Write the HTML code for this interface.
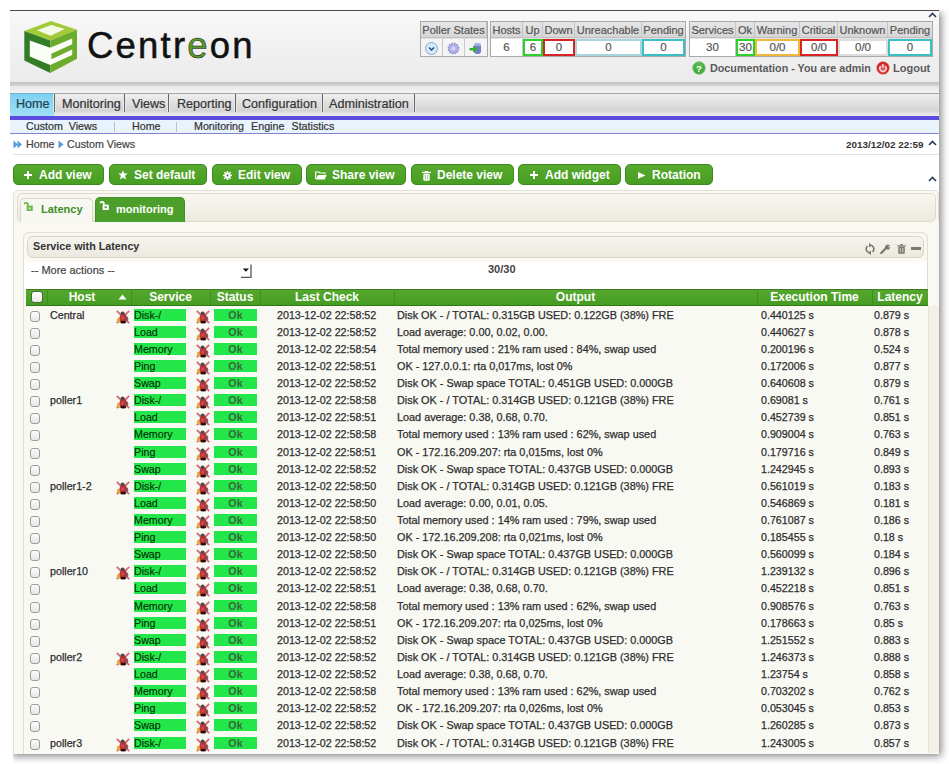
<!DOCTYPE html>
<html><head><meta charset="utf-8">
<style>
*{box-sizing:border-box;margin:0;padding:0}
html,body{width:949px;height:764px;overflow:hidden;background:#fff;font-family:"Liberation Sans",sans-serif;color:#333}
.a{position:absolute}
#page{position:absolute;left:10px;top:10px;width:929px;height:744px;background:#fff;box-shadow:2px 2px 8px rgba(0,0,0,0.5);clip-path:inset(0 -20px -20px 3px)}
#hdr{position:absolute;left:10px;top:10px;width:929px;height:72px;border-top:1px solid #4e4a46;background:linear-gradient(#f8f8f8,#f1f1f1 50%,#ebebeb)}
#hshadow{position:absolute;left:10px;top:82px;width:929px;height:4px;background:linear-gradient(#c0c0c0,#d4d4d4)}
#hgap{position:absolute;left:10px;top:86px;width:929px;height:7px;background:linear-gradient(#e8e8e8,#f4f4f4)}
#menu{position:absolute;left:10px;top:93px;width:929px;height:23px;border-top:1px solid #a4a4a4;background:linear-gradient(#f0f0f0,#e2e2e2 35%,#d4d4d4 75%,#e6e6e6 90%,#ececec)}
#home{position:absolute;left:10px;top:93px;width:44px;height:23px;border-top:1px solid #6aaed8;background:linear-gradient(#80d0f0,#92daf4 60%,#a0e0f4)}
.mi{position:absolute;top:97px;font-size:12.6px;color:#333;line-height:15px;white-space:nowrap}
.msep{position:absolute;top:94px;width:3px;height:18px;border-left:1px solid #e8e8e8;border-right:1px solid #e8e8e8;background:#666}
#purple{position:absolute;left:10px;top:116px;width:929px;height:4px;background:#5b4be0}
#sub{position:absolute;left:10px;top:120px;width:929px;height:14px;background:#e8f3fc;border-bottom:1px solid #8480d4}
.si{position:absolute;top:120px;font-size:10.7px;color:#333;line-height:13px;white-space:nowrap}
.ssep{position:absolute;top:122px;width:1px;height:10px;background:#b8c0cc}
#bc{position:absolute;left:26px;top:138px;font-size:10.7px;line-height:13px;color:#444;white-space:nowrap}
#bcline{position:absolute;left:13px;top:154px;width:926px;height:1px;background:#e2e2e2}
#date{position:absolute;left:846px;top:139px;font-size:9.9px;font-weight:bold;color:#333;line-height:12px}
.caret{position:absolute;width:9px;height:6px}
.btn{position:absolute;top:164px;height:21px;border-radius:5px;background:linear-gradient(#56aa2e,#489e22);border:1px solid #3d8a20;color:#fff;font-weight:bold;font-size:12px;line-height:19px;white-space:nowrap}
.btn .t{position:absolute;top:1px}
.btn svg{position:absolute}
/* poller tables */
.pt{position:absolute;border:1px solid #a9a9a9;background:#e3e3e3}
.ph{position:absolute;top:22px;height:16px;background:linear-gradient(#e6e6e6,#d6d6d6);font-size:11px;color:#555;line-height:17px;text-align:center;white-space:nowrap;border-right:1px solid #c4c4c4;border-bottom:1px solid #c0c0c0}
.pd{position:absolute;top:39px;height:17px;background:#fff;font-size:11.5px;color:#555;line-height:15px;text-align:center;border-right:1px solid #c8c8c8}
#doc{position:absolute;left:710px;top:62px;font-size:10.76px;font-weight:bold;color:#5a5a5a;line-height:13px;white-space:nowrap}
#logout{position:absolute;left:893px;top:62px;font-size:11px;font-weight:bold;color:#5a5a5a;line-height:13px}
/* tabs */
#tabs{position:absolute;left:13px;top:190px;width:926px;height:580px;border:1px solid #e3e0d2;border-radius:5px;background:#f8f7f1}
#tabnav{position:absolute;left:17px;top:193px;width:919px;height:29px;border:1px solid #dedbcc;border-radius:5px;background:linear-gradient(#f8f7f1,#eceadf)}
#tab1{position:absolute;left:20px;top:198px;width:73px;height:24px;border:1px solid #dcd9ca;border-bottom:none;border-radius:5px 5px 0 0;background:#f8f8f3}
#tab2{position:absolute;left:95px;top:197px;width:90px;height:25px;border-radius:5px 5px 0 0;background:#4c9f2a;border:1px solid #448f24;border-bottom:none}
#panel{position:absolute;left:14px;top:222px;width:925px;height:540px;background:#f9f8f3}
#widget{position:absolute;left:23px;top:232px;width:905px;height:540px;border:1px solid #e2dfd0;border-radius:6px;background:#f8f7f1}
#whead{position:absolute;left:27px;top:236px;width:897px;height:22px;border:1px solid #d8d5c6;border-radius:6px;background:linear-gradient(#f5f4ee,#ebe9df)}
#wtitle{position:absolute;left:33px;top:240px;font-size:10.75px;font-weight:bold;color:#333;line-height:13px}
#wbody{position:absolute;left:24px;top:258px;width:903px;height:31px;background:linear-gradient(#f7f6ef,#fff 6px)}
#more{position:absolute;left:31px;top:264px;font-size:11px;color:#444;line-height:13px}
#count{position:absolute;left:488px;top:263px;font-size:11px;font-weight:bold;color:#444;line-height:13px}
#thead{position:absolute;left:26px;top:289px;width:902px;height:17px;background:linear-gradient(#55a82e,#469c22);border-top:1px solid #3f7a22;border-bottom:1px solid #2f7a14}
.th{position:absolute;top:289px;height:16px;color:#fff;font-weight:bold;font-size:12px;line-height:16px;text-align:center;white-space:nowrap}
.tsep{position:absolute;top:289px;width:1px;height:16px;background:#3f8e21}
#tbody{position:absolute;left:24px;top:306px;width:904px;height:460px;background:#f9f9f4}
.row{position:absolute;left:0;width:949px;height:17px}
.row span{position:absolute;top:0;white-space:nowrap;font-size:10.7px;line-height:18.4px;color:#2e2e2e;-webkit-text-stroke:0.25px #2e2e2e}
.row .cb{left:30px;top:5px;width:10px;height:11px;border:1px solid #9c9c9c;border-radius:3px;background:linear-gradient(#fbfbfb,#e6e6e6)}
.row .host{left:50px}
.row .hbug{left:116px;top:4px}
.row .sbug{left:196px;top:4px}
.row .svc{left:134px;top:3px;width:52px;height:12px;line-height:12.6px;background:#23e74a;color:#062a08;-webkit-text-stroke:0.12px #062a08!important}
.row .st{left:214px;top:3px;width:43px;height:12px;line-height:12.6px;background:#23e74a;color:#3a663c;text-align:center;font-weight:bold;-webkit-text-stroke:0!important}
.row .lc{left:277px}
.row .out{left:397px;font-size:10.85px!important}
.row .ex{left:761px}
.row .lat{left:874px}
.bug{display:block}
.mi,.si,#bc,.ph,.pd,#more,.bc2{-webkit-text-stroke:0.2px currentColor}
</style></head><body>
<div id="page"></div>
<div id="wrap" style="position:absolute;left:0;top:0;width:939px;height:754px;overflow:hidden">
<div id="hdr"></div>
<div id="hshadow"></div>
<div id="hgap"></div>
<!-- logo -->
<svg class="a" style="left:20px;top:18px" width="60" height="60" viewBox="0 0 60 60">
<polygon points="31,3.1 57,11.8 30.2,22.4 4.3,13" fill="#a2ca38"/>
<polygon points="16.9,12.2 31.4,7.1 44.8,11 30.6,17.7" fill="#f4fbe6"/>
<polygon points="4.3,13 30.2,22.4 30.2,55 4.3,42.4" fill="#337d27"/>
<polygon points="30.2,22.4 57,11.8 57,40.8 30.2,55" fill="#6cac2c"/>
<polygon points="9.8,22.4 30.2,29.8 52.2,20.6 52.2,26.3 31.4,35.7 31.4,41.2 52.2,31.4 52.2,36.9 30.2,47 9.8,38.5" fill="#fbfdf7"/>
</svg>
<div class="a" style="left:87px;top:26px;font-size:36.5px;letter-spacing:2.2px;color:#111;-webkit-text-stroke:0.5px #111;line-height:40px;white-space:nowrap">Centr<span style="color:#5b9a2a">e</span>on</div>

<!-- poller states -->
<div class="pt" style="left:420px;top:21px;width:68px;height:36px"></div>
<div class="ph" style="left:421px;width:66px">Poller States</div>
<div class="pd" style="left:421px;width:22px;background:#f4f4f4"></div>
<div class="pd" style="left:443px;width:22px;background:#f4f4f4"></div>
<div class="pd" style="left:465px;width:22px;border-right:none;background:#f4f4f4"></div>
<svg class="a" style="left:425px;top:42px" width="13" height="13" viewBox="0 0 13 13"><circle cx="6.5" cy="6.5" r="6" fill="#d4eaf8" stroke="#8aa8c4" stroke-width="1"/><path d="M4 5.5 L6.5 8 L9 5.5" stroke="#234a80" stroke-width="1.5" fill="none"/></svg>
<svg class="a" style="left:447px;top:42px" width="13" height="13" viewBox="0 0 13 13"><circle cx="6.5" cy="6.5" r="5.2" fill="#b0b0e8" stroke="#9090d0" stroke-width="1.4" stroke-dasharray="1.6 1.1"/><circle cx="6.5" cy="6.5" r="2" fill="#d8d8f4"/></svg>
<svg class="a" style="left:469px;top:42px" width="13" height="13" viewBox="0 0 13 13"><rect x="5" y="2" width="7" height="10" rx="3" fill="#7080c0"/><ellipse cx="8.5" cy="2.5" rx="3.5" ry="1.5" fill="#a0b0e0"/><rect x="0.5" y="6" width="4" height="2.4" fill="#30b030"/><path d="M8.5 7.2 L4 3.8 L4 10.6 Z" fill="#30b030"/></svg>

<div class="pt" style="left:490px;top:21px;width:196px;height:36px"></div>
<div class="ph" style="left:491px;width:32px">Hosts</div>
<div class="ph" style="left:523px;width:20px">Up</div>
<div class="ph" style="left:543px;width:32px">Down</div>
<div class="ph" style="left:575px;width:67px">Unreachable</div>
<div class="ph" style="left:642px;width:43px;border-right:none">Pending</div>
<div class="pd" style="left:491px;width:32px;line-height:17px">6</div>
<div class="pd" style="left:523px;width:20px;border:2.5px solid #2ad22a;line-height:12px">6</div>
<div class="pd" style="left:543px;width:32px;border:2.5px solid #d82424;line-height:12px">0</div>
<div class="pd" style="left:575px;width:67px;border:2px solid #a8d4dc;line-height:13px">0</div>
<div class="pd" style="left:642px;width:43px;border:2.5px solid #3cc0c4;line-height:12px">0</div>

<div class="pt" style="left:689px;top:21px;width:244px;height:36px"></div>
<div class="ph" style="left:690px;width:46px">Services</div>
<div class="ph" style="left:736px;width:19px">Ok</div>
<div class="ph" style="left:755px;width:45px">Warning</div>
<div class="ph" style="left:800px;width:38px">Critical</div>
<div class="ph" style="left:838px;width:50px">Unknown</div>
<div class="ph" style="left:888px;width:44px;border-right:none">Pending</div>
<div class="pd" style="left:690px;width:46px;line-height:17px">30</div>
<div class="pd" style="left:736px;width:19px;border:2.5px solid #2ad22a;line-height:12px">30</div>
<div class="pd" style="left:755px;width:45px;border:2.5px solid #f0b83a;line-height:12px">0/0</div>
<div class="pd" style="left:800px;width:38px;border:2.5px solid #d82424;line-height:12px">0/0</div>
<div class="pd" style="left:838px;width:50px;border:2px solid #dcdcdc;line-height:13px">0/0</div>
<div class="pd" style="left:888px;width:44px;border:2.5px solid #3cc0c4;line-height:12px">0</div>

<svg class="a" style="left:692px;top:61px" width="14" height="14" viewBox="0 0 14 14"><circle cx="7" cy="7" r="6.4" fill="#44aa3a" stroke="#a8cca8" stroke-width="0.9"/><circle cx="7" cy="5.5" r="4" fill="#66c05a" opacity="0.6"/><text x="7" y="10.6" font-size="9.5" font-weight="bold" text-anchor="middle" fill="#fff" font-family="Liberation Sans">?</text></svg>
<div id="doc">Documentation - You are admin</div>
<svg class="a" style="left:876px;top:61px" width="14" height="14" viewBox="0 0 14 14"><circle cx="7" cy="7" r="6.5" fill="#c82424" stroke="#e8a8a8" stroke-width="0.8"/><circle cx="7" cy="7.6" r="4.4" fill="#e25050"/><path d="M4.7 5.2 A3.1 3.1 0 1 0 9.3 5.2" stroke="#fbe0e0" stroke-width="1.4" fill="none"/><path d="M7 3 V7" stroke="#fbe0e0" stroke-width="1.4"/></svg>
<div id="logout">Logout</div>
<svg class="caret" style="left:928px;top:12px" viewBox="0 0 9 6"><path d="M1 5 L4.5 1.5 L8 5" stroke="#2a3a5a" stroke-width="1.6" fill="none"/></svg>

<!-- menu -->
<div id="menu"></div>
<div id="home"></div>
<div class="mi" style="left:16px;color:#1e4050">Home</div>
<div class="msep" style="left:53px"></div>
<div class="mi" style="left:62px">Monitoring</div>
<div class="msep" style="left:123px"></div>
<div class="mi" style="left:132px">Views</div>
<div class="msep" style="left:167px"></div>
<div class="mi" style="left:177px">Reporting</div>
<div class="msep" style="left:234px"></div>
<div class="mi" style="left:242px">Configuration</div>
<div class="msep" style="left:321px"></div>
<div class="mi" style="left:329px">Administration</div>
<div class="msep" style="left:413px"></div>
<div id="purple"></div>
<div id="sub"></div>
<div class="si" style="left:26px;word-spacing:3px">Custom Views</div>
<div class="ssep" style="left:114px"></div>
<div class="si" style="left:132px">Home</div>
<div class="ssep" style="left:176px"></div>
<div class="si" style="left:194px;word-spacing:4.2px">Monitoring Engine Statistics</div>

<!-- breadcrumb -->
<svg class="a" style="left:13px;top:140px" width="10" height="9" viewBox="0 0 10 9"><path d="M0.5 0.5 L5 4.5 L0.5 8.5 Z M4.5 0.5 L9 4.5 L4.5 8.5 Z" fill="#5a9ae0"/></svg>
<div id="bc">Home</div>
<svg class="a" style="left:58px;top:140px" width="6" height="9" viewBox="0 0 6 9"><path d="M0.5 0.5 L5.5 4.5 L0.5 8.5 Z" fill="#5a9ae0"/></svg>
<div class="a bc2" style="left:67px;top:138px;font-size:10.7px;line-height:13px;color:#444;white-space:nowrap">Custom Views</div>
<div id="bcline"></div>
<div id="date">2013/12/02 22:59</div>
<svg class="caret" style="left:928px;top:140px" viewBox="0 0 9 6"><path d="M1 5 L4.5 1.5 L8 5" stroke="#2a3a5a" stroke-width="1.6" fill="none"/></svg>

<!-- buttons -->
<div class="btn" style="left:13px;width:91px"><svg style="left:10px;top:6px" width="8" height="8" viewBox="0 0 8 8"><path d="M4 0V8M0 4H8" stroke="#fff" stroke-width="2"/></svg><span class="t" style="left:25px">Add view</span></div>
<div class="btn" style="left:109px;width:98px"><svg style="left:8px;top:5px" width="10" height="10" viewBox="0 0 10 10"><path d="M5 0.2 L6.3 3.5 L9.8 3.6 L7 5.8 L8.1 9.6 L5 7.5 L1.9 9.6 L3 5.8 L0.2 3.6 L3.7 3.5Z" fill="#fff"/></svg><span class="t" style="left:24px">Set default</span></div>
<div class="btn" style="left:212px;width:90px"><svg style="left:10px;top:5.5px" width="9" height="9" viewBox="0 0 9 9"><g fill="#fff"><circle cx="4.5" cy="4.5" r="3.1"/><rect x="3.8" y="0" width="1.4" height="9"/><rect x="0" y="3.8" width="9" height="1.4"/><rect x="3.8" y="0" width="1.4" height="9" transform="rotate(45 4.5 4.5)"/><rect x="0" y="3.8" width="9" height="1.4" transform="rotate(45 4.5 4.5)"/></g><circle cx="4.5" cy="4.5" r="0.9" fill="#3a5a2a"/></svg><span class="t" style="left:25px">Edit view</span></div>
<div class="btn" style="left:306px;width:100px"><svg style="left:8px;top:6px" width="12" height="9" viewBox="0 0 12 9"><path d="M0.7 8 V1 H4 L5 2 H10 V3.2" stroke="#fff" stroke-width="1.2" fill="none"/><path d="M3 4 H11.8 L9.6 8.6 H0.8Z" fill="#fff"/></svg><span class="t" style="left:25px">Share view</span></div>
<div class="btn" style="left:411px;width:103px"><svg style="left:10px;top:6px" width="9" height="10" viewBox="0 0 9 10"><rect x="1.3" y="2.8" width="6.4" height="7" rx="1.2" fill="#fff"/><rect x="0" y="0.8" width="9" height="1.3" fill="#fff"/><rect x="3" y="0" width="3" height="1" fill="#fff"/><path d="M3.3 4 V8.3 M5.7 4 V8.3" stroke="#8aa878" stroke-width="0.8"/></svg><span class="t" style="left:25px">Delete view</span></div>
<div class="btn" style="left:518px;width:103px"><svg style="left:11px;top:6px" width="8" height="8" viewBox="0 0 8 8"><path d="M4 0V8M0 4H8" stroke="#fff" stroke-width="2"/></svg><span class="t" style="left:26px">Add widget</span></div>
<div class="btn" style="left:625px;width:88px"><svg style="left:11.5px;top:6.8px" width="8" height="7" viewBox="0 0 8 7"><path d="M0 0 L7.6 3.4 L0 6.8Z" fill="#fff"/></svg><span class="t" style="left:26px">Rotation</span></div>
<svg class="caret" style="left:928px;top:176px" viewBox="0 0 9 6"><path d="M1 5 L4.5 1.5 L8 5" stroke="#2a3a5a" stroke-width="1.6" fill="none"/></svg>

<!-- tabs -->
<div id="tabs"></div>
<div id="tabnav"></div>
<div id="panel"></div>
<div id="tab1"></div>
<div id="tab2"></div>
<svg class="a" style="left:23px;top:201px" width="11" height="11" viewBox="0 0 11 11"><path d="M1.2 3.2 A2 2 0 0 1 4.8 2.8 V5" stroke="#72b652" stroke-width="1.7" fill="none"/><rect x="3.6" y="4.6" width="6.2" height="5.4" fill="#72b652"/><rect x="5.6" y="6.4" width="2.2" height="1.8" fill="#b8f0a0"/></svg>
<div class="a" style="left:41px;top:203px;font-size:11px;font-weight:bold;color:#3e8e26;line-height:13px">Latency</div>
<svg class="a" style="left:99px;top:200px" width="11" height="11" viewBox="0 0 11 11"><path d="M1.2 3.2 A2 2 0 0 1 4.8 2.8 V5" stroke="#fff" stroke-width="1.7" fill="none"/><rect x="3.6" y="4.6" width="6.2" height="5.4" fill="#fff"/><rect x="5.6" y="6.4" width="2.2" height="1.8" fill="#4c9f2a"/></svg>
<div class="a" style="left:116px;top:203px;font-size:11px;font-weight:bold;color:#fff;line-height:13px">monitoring</div>

<!-- widget -->
<div id="widget"></div>
<div id="whead"></div>
<div id="wtitle">Service with Latency</div>
<svg class="a" style="left:865px;top:243px" width="10" height="12" viewBox="0 0 10 12"><path d="M6 2.2 A4 4 0 0 1 7.5 9 M4 9.8 A4 4 0 0 1 2.5 3" stroke="#7a786e" stroke-width="1.6" fill="none"/><path d="M4 0 L6.8 2.2 L4 4.4Z M6 7.6 L3.2 9.8 L6 12Z" fill="#7a786e"/></svg>
<svg class="a" style="left:880px;top:244px" width="11" height="10" viewBox="0 0 11 10"><path d="M1.2 9 L6 4.2" stroke="#7a786e" stroke-width="2.2" stroke-linecap="round"/><path d="M5 4 A2.8 2.8 0 0 1 9.8 1.5 L8.2 3 L8.8 3.8 L10.4 2.5 A2.8 2.8 0 0 1 6.2 5.2Z" fill="#7a786e"/></svg>
<svg class="a" style="left:897px;top:244px" width="9" height="10" viewBox="0 0 9 10"><rect x="1.2" y="2.8" width="6.6" height="7" rx="1" fill="#7a786e"/><rect x="0.2" y="1.3" width="8.6" height="1.2" fill="#7a786e"/><rect x="3" y="0.2" width="3" height="1.2" fill="#7a786e"/><path d="M3.2 4 V8.5 M5.8 4 V8.5" stroke="#f2f0e8" stroke-width="0.8"/></svg>
<div class="a" style="left:911px;top:247px;width:10px;height:3px;background:#7a786e"></div>
<div id="wbody"></div>
<div id="more">-- More actions --</div>
<svg class="a" style="left:240px;top:264px" width="12" height="14" viewBox="0 0 12 14"><rect x="0" y="0" width="11" height="13" fill="#fff"/><path d="M11 0.5 V13.4 H1" stroke="#555" stroke-width="1.3" fill="none"/><path d="M2.8 4.4 H9 L5.9 7.8Z" fill="#111"/></svg>
<div id="count">30/30</div>

<div id="thead"></div>
<div class="tsep" style="left:47px"></div>
<div class="tsep" style="left:131px"></div>
<div class="tsep" style="left:210px"></div>
<div class="tsep" style="left:260px"></div>
<div class="tsep" style="left:394px"></div>
<div class="tsep" style="left:757px"></div>
<div class="tsep" style="left:872px"></div>
<div class="a" style="left:31px;top:291px;width:12px;height:12px;border:1.5px solid #46683a;border-radius:3px;background:linear-gradient(#fff,#e8e8e8)"></div>
<div class="th" style="left:47px;width:70px">Host</div>
<svg class="a" style="left:118px;top:294px" width="9" height="6" viewBox="0 0 9 6"><path d="M0.5 5.5 L4.5 0.5 L8.5 5.5Z" fill="#fff"/></svg>
<div class="th" style="left:131px;width:79px">Service</div>
<div class="th" style="left:210px;width:50px">Status</div>
<div class="th" style="left:260px;width:134px">Last Check</div>
<div class="th" style="left:394px;width:363px">Output</div>
<div class="th" style="left:757px;width:115px">Execution Time</div>
<div class="th" style="left:872px;width:56px">Latency</div>

<div id="tbody"></div>
<div class="row" style="top:305.5px"><span class="cb"></span><span class="host">Central</span><span class="hbug"><svg class="bug" width="14" height="14" viewBox="0 0 14 14"><path d="M0.8 0.8 L13.2 13.2 M13.2 0.8 L0.8 13.2" stroke="#d85868" stroke-width="1.9" opacity="0.9"/><ellipse cx="3" cy="10.2" rx="2.1" ry="2.7" fill="#eaa83a"/><ellipse cx="11" cy="9" rx="1.3" ry="2.4" fill="#6a6a6a"/><ellipse cx="7.2" cy="8" rx="3.6" ry="4.5" fill="#b8343c"/><ellipse cx="7.2" cy="12.2" rx="3" ry="1.4" fill="#2a0a0a"/><ellipse cx="6.6" cy="3.2" rx="2" ry="1.7" fill="#4a4a4a"/><ellipse cx="6.6" cy="8" rx="1.4" ry="1.8" fill="#d84a50"/></svg></span><span class="svc">Disk-/</span><span class="sbug"><svg class="bug" width="14" height="14" viewBox="0 0 14 14"><path d="M0.8 0.8 L13.2 13.2 M13.2 0.8 L0.8 13.2" stroke="#d85868" stroke-width="1.9" opacity="0.9"/><ellipse cx="3" cy="10.2" rx="2.1" ry="2.7" fill="#eaa83a"/><ellipse cx="11" cy="9" rx="1.3" ry="2.4" fill="#6a6a6a"/><ellipse cx="7.2" cy="8" rx="3.6" ry="4.5" fill="#b8343c"/><ellipse cx="7.2" cy="12.2" rx="3" ry="1.4" fill="#2a0a0a"/><ellipse cx="6.6" cy="3.2" rx="2" ry="1.7" fill="#4a4a4a"/><ellipse cx="6.6" cy="8" rx="1.4" ry="1.8" fill="#d84a50"/></svg></span><span class="st">Ok</span><span class="lc">2013-12-02 22:58:52</span><span class="out">Disk OK - / TOTAL: 0.315GB USED: 0.122GB (38%) FRE</span><span class="ex">0.440125 s</span><span class="lat">0.879 s</span></div>
<div class="row" style="top:322.6px"><span class="cb"></span><span class="host"></span><span class="svc">Load</span><span class="sbug"><svg class="bug" width="14" height="14" viewBox="0 0 14 14"><path d="M0.8 0.8 L13.2 13.2 M13.2 0.8 L0.8 13.2" stroke="#d85868" stroke-width="1.9" opacity="0.9"/><ellipse cx="3" cy="10.2" rx="2.1" ry="2.7" fill="#eaa83a"/><ellipse cx="11" cy="9" rx="1.3" ry="2.4" fill="#6a6a6a"/><ellipse cx="7.2" cy="8" rx="3.6" ry="4.5" fill="#b8343c"/><ellipse cx="7.2" cy="12.2" rx="3" ry="1.4" fill="#2a0a0a"/><ellipse cx="6.6" cy="3.2" rx="2" ry="1.7" fill="#4a4a4a"/><ellipse cx="6.6" cy="8" rx="1.4" ry="1.8" fill="#d84a50"/></svg></span><span class="st">Ok</span><span class="lc">2013-12-02 22:58:52</span><span class="out">Load average: 0.00, 0.02, 0.00.</span><span class="ex">0.440627 s</span><span class="lat">0.878 s</span></div>
<div class="row" style="top:339.7px"><span class="cb"></span><span class="host"></span><span class="svc">Memory</span><span class="sbug"><svg class="bug" width="14" height="14" viewBox="0 0 14 14"><path d="M0.8 0.8 L13.2 13.2 M13.2 0.8 L0.8 13.2" stroke="#d85868" stroke-width="1.9" opacity="0.9"/><ellipse cx="3" cy="10.2" rx="2.1" ry="2.7" fill="#eaa83a"/><ellipse cx="11" cy="9" rx="1.3" ry="2.4" fill="#6a6a6a"/><ellipse cx="7.2" cy="8" rx="3.6" ry="4.5" fill="#b8343c"/><ellipse cx="7.2" cy="12.2" rx="3" ry="1.4" fill="#2a0a0a"/><ellipse cx="6.6" cy="3.2" rx="2" ry="1.7" fill="#4a4a4a"/><ellipse cx="6.6" cy="8" rx="1.4" ry="1.8" fill="#d84a50"/></svg></span><span class="st">Ok</span><span class="lc">2013-12-02 22:58:54</span><span class="out">Total memory used : 21% ram used : 84%, swap used</span><span class="ex">0.200196 s</span><span class="lat">0.524 s</span></div>
<div class="row" style="top:356.9px"><span class="cb"></span><span class="host"></span><span class="svc">Ping</span><span class="sbug"><svg class="bug" width="14" height="14" viewBox="0 0 14 14"><path d="M0.8 0.8 L13.2 13.2 M13.2 0.8 L0.8 13.2" stroke="#d85868" stroke-width="1.9" opacity="0.9"/><ellipse cx="3" cy="10.2" rx="2.1" ry="2.7" fill="#eaa83a"/><ellipse cx="11" cy="9" rx="1.3" ry="2.4" fill="#6a6a6a"/><ellipse cx="7.2" cy="8" rx="3.6" ry="4.5" fill="#b8343c"/><ellipse cx="7.2" cy="12.2" rx="3" ry="1.4" fill="#2a0a0a"/><ellipse cx="6.6" cy="3.2" rx="2" ry="1.7" fill="#4a4a4a"/><ellipse cx="6.6" cy="8" rx="1.4" ry="1.8" fill="#d84a50"/></svg></span><span class="st">Ok</span><span class="lc">2013-12-02 22:58:51</span><span class="out">OK - 127.0.0.1: rta 0,017ms, lost 0%</span><span class="ex">0.172006 s</span><span class="lat">0.877 s</span></div>
<div class="row" style="top:374.0px"><span class="cb"></span><span class="host"></span><span class="svc">Swap</span><span class="sbug"><svg class="bug" width="14" height="14" viewBox="0 0 14 14"><path d="M0.8 0.8 L13.2 13.2 M13.2 0.8 L0.8 13.2" stroke="#d85868" stroke-width="1.9" opacity="0.9"/><ellipse cx="3" cy="10.2" rx="2.1" ry="2.7" fill="#eaa83a"/><ellipse cx="11" cy="9" rx="1.3" ry="2.4" fill="#6a6a6a"/><ellipse cx="7.2" cy="8" rx="3.6" ry="4.5" fill="#b8343c"/><ellipse cx="7.2" cy="12.2" rx="3" ry="1.4" fill="#2a0a0a"/><ellipse cx="6.6" cy="3.2" rx="2" ry="1.7" fill="#4a4a4a"/><ellipse cx="6.6" cy="8" rx="1.4" ry="1.8" fill="#d84a50"/></svg></span><span class="st">Ok</span><span class="lc">2013-12-02 22:58:52</span><span class="out">Disk OK - Swap space TOTAL: 0.451GB USED: 0.000GB</span><span class="ex">0.640608 s</span><span class="lat">0.879 s</span></div>
<div class="row" style="top:391.1px"><span class="cb"></span><span class="host">poller1</span><span class="hbug"><svg class="bug" width="14" height="14" viewBox="0 0 14 14"><path d="M0.8 0.8 L13.2 13.2 M13.2 0.8 L0.8 13.2" stroke="#d85868" stroke-width="1.9" opacity="0.9"/><ellipse cx="3" cy="10.2" rx="2.1" ry="2.7" fill="#eaa83a"/><ellipse cx="11" cy="9" rx="1.3" ry="2.4" fill="#6a6a6a"/><ellipse cx="7.2" cy="8" rx="3.6" ry="4.5" fill="#b8343c"/><ellipse cx="7.2" cy="12.2" rx="3" ry="1.4" fill="#2a0a0a"/><ellipse cx="6.6" cy="3.2" rx="2" ry="1.7" fill="#4a4a4a"/><ellipse cx="6.6" cy="8" rx="1.4" ry="1.8" fill="#d84a50"/></svg></span><span class="svc">Disk-/</span><span class="sbug"><svg class="bug" width="14" height="14" viewBox="0 0 14 14"><path d="M0.8 0.8 L13.2 13.2 M13.2 0.8 L0.8 13.2" stroke="#d85868" stroke-width="1.9" opacity="0.9"/><ellipse cx="3" cy="10.2" rx="2.1" ry="2.7" fill="#eaa83a"/><ellipse cx="11" cy="9" rx="1.3" ry="2.4" fill="#6a6a6a"/><ellipse cx="7.2" cy="8" rx="3.6" ry="4.5" fill="#b8343c"/><ellipse cx="7.2" cy="12.2" rx="3" ry="1.4" fill="#2a0a0a"/><ellipse cx="6.6" cy="3.2" rx="2" ry="1.7" fill="#4a4a4a"/><ellipse cx="6.6" cy="8" rx="1.4" ry="1.8" fill="#d84a50"/></svg></span><span class="st">Ok</span><span class="lc">2013-12-02 22:58:58</span><span class="out">Disk OK - / TOTAL: 0.314GB USED: 0.121GB (38%) FRE</span><span class="ex">0.69081 s</span><span class="lat">0.761 s</span></div>
<div class="row" style="top:408.2px"><span class="cb"></span><span class="host"></span><span class="svc">Load</span><span class="sbug"><svg class="bug" width="14" height="14" viewBox="0 0 14 14"><path d="M0.8 0.8 L13.2 13.2 M13.2 0.8 L0.8 13.2" stroke="#d85868" stroke-width="1.9" opacity="0.9"/><ellipse cx="3" cy="10.2" rx="2.1" ry="2.7" fill="#eaa83a"/><ellipse cx="11" cy="9" rx="1.3" ry="2.4" fill="#6a6a6a"/><ellipse cx="7.2" cy="8" rx="3.6" ry="4.5" fill="#b8343c"/><ellipse cx="7.2" cy="12.2" rx="3" ry="1.4" fill="#2a0a0a"/><ellipse cx="6.6" cy="3.2" rx="2" ry="1.7" fill="#4a4a4a"/><ellipse cx="6.6" cy="8" rx="1.4" ry="1.8" fill="#d84a50"/></svg></span><span class="st">Ok</span><span class="lc">2013-12-02 22:58:51</span><span class="out">Load average: 0.38, 0.68, 0.70.</span><span class="ex">0.452739 s</span><span class="lat">0.851 s</span></div>
<div class="row" style="top:425.3px"><span class="cb"></span><span class="host"></span><span class="svc">Memory</span><span class="sbug"><svg class="bug" width="14" height="14" viewBox="0 0 14 14"><path d="M0.8 0.8 L13.2 13.2 M13.2 0.8 L0.8 13.2" stroke="#d85868" stroke-width="1.9" opacity="0.9"/><ellipse cx="3" cy="10.2" rx="2.1" ry="2.7" fill="#eaa83a"/><ellipse cx="11" cy="9" rx="1.3" ry="2.4" fill="#6a6a6a"/><ellipse cx="7.2" cy="8" rx="3.6" ry="4.5" fill="#b8343c"/><ellipse cx="7.2" cy="12.2" rx="3" ry="1.4" fill="#2a0a0a"/><ellipse cx="6.6" cy="3.2" rx="2" ry="1.7" fill="#4a4a4a"/><ellipse cx="6.6" cy="8" rx="1.4" ry="1.8" fill="#d84a50"/></svg></span><span class="st">Ok</span><span class="lc">2013-12-02 22:58:58</span><span class="out">Total memory used : 13% ram used : 62%, swap used</span><span class="ex">0.909004 s</span><span class="lat">0.763 s</span></div>
<div class="row" style="top:442.5px"><span class="cb"></span><span class="host"></span><span class="svc">Ping</span><span class="sbug"><svg class="bug" width="14" height="14" viewBox="0 0 14 14"><path d="M0.8 0.8 L13.2 13.2 M13.2 0.8 L0.8 13.2" stroke="#d85868" stroke-width="1.9" opacity="0.9"/><ellipse cx="3" cy="10.2" rx="2.1" ry="2.7" fill="#eaa83a"/><ellipse cx="11" cy="9" rx="1.3" ry="2.4" fill="#6a6a6a"/><ellipse cx="7.2" cy="8" rx="3.6" ry="4.5" fill="#b8343c"/><ellipse cx="7.2" cy="12.2" rx="3" ry="1.4" fill="#2a0a0a"/><ellipse cx="6.6" cy="3.2" rx="2" ry="1.7" fill="#4a4a4a"/><ellipse cx="6.6" cy="8" rx="1.4" ry="1.8" fill="#d84a50"/></svg></span><span class="st">Ok</span><span class="lc">2013-12-02 22:58:51</span><span class="out">OK - 172.16.209.207: rta 0,015ms, lost 0%</span><span class="ex">0.179716 s</span><span class="lat">0.849 s</span></div>
<div class="row" style="top:459.6px"><span class="cb"></span><span class="host"></span><span class="svc">Swap</span><span class="sbug"><svg class="bug" width="14" height="14" viewBox="0 0 14 14"><path d="M0.8 0.8 L13.2 13.2 M13.2 0.8 L0.8 13.2" stroke="#d85868" stroke-width="1.9" opacity="0.9"/><ellipse cx="3" cy="10.2" rx="2.1" ry="2.7" fill="#eaa83a"/><ellipse cx="11" cy="9" rx="1.3" ry="2.4" fill="#6a6a6a"/><ellipse cx="7.2" cy="8" rx="3.6" ry="4.5" fill="#b8343c"/><ellipse cx="7.2" cy="12.2" rx="3" ry="1.4" fill="#2a0a0a"/><ellipse cx="6.6" cy="3.2" rx="2" ry="1.7" fill="#4a4a4a"/><ellipse cx="6.6" cy="8" rx="1.4" ry="1.8" fill="#d84a50"/></svg></span><span class="st">Ok</span><span class="lc">2013-12-02 22:58:52</span><span class="out">Disk OK - Swap space TOTAL: 0.437GB USED: 0.000GB</span><span class="ex">1.242945 s</span><span class="lat">0.893 s</span></div>
<div class="row" style="top:476.7px"><span class="cb"></span><span class="host">poller1-2</span><span class="hbug"><svg class="bug" width="14" height="14" viewBox="0 0 14 14"><path d="M0.8 0.8 L13.2 13.2 M13.2 0.8 L0.8 13.2" stroke="#d85868" stroke-width="1.9" opacity="0.9"/><ellipse cx="3" cy="10.2" rx="2.1" ry="2.7" fill="#eaa83a"/><ellipse cx="11" cy="9" rx="1.3" ry="2.4" fill="#6a6a6a"/><ellipse cx="7.2" cy="8" rx="3.6" ry="4.5" fill="#b8343c"/><ellipse cx="7.2" cy="12.2" rx="3" ry="1.4" fill="#2a0a0a"/><ellipse cx="6.6" cy="3.2" rx="2" ry="1.7" fill="#4a4a4a"/><ellipse cx="6.6" cy="8" rx="1.4" ry="1.8" fill="#d84a50"/></svg></span><span class="svc">Disk-/</span><span class="sbug"><svg class="bug" width="14" height="14" viewBox="0 0 14 14"><path d="M0.8 0.8 L13.2 13.2 M13.2 0.8 L0.8 13.2" stroke="#d85868" stroke-width="1.9" opacity="0.9"/><ellipse cx="3" cy="10.2" rx="2.1" ry="2.7" fill="#eaa83a"/><ellipse cx="11" cy="9" rx="1.3" ry="2.4" fill="#6a6a6a"/><ellipse cx="7.2" cy="8" rx="3.6" ry="4.5" fill="#b8343c"/><ellipse cx="7.2" cy="12.2" rx="3" ry="1.4" fill="#2a0a0a"/><ellipse cx="6.6" cy="3.2" rx="2" ry="1.7" fill="#4a4a4a"/><ellipse cx="6.6" cy="8" rx="1.4" ry="1.8" fill="#d84a50"/></svg></span><span class="st">Ok</span><span class="lc">2013-12-02 22:58:50</span><span class="out">Disk OK - / TOTAL: 0.314GB USED: 0.121GB (38%) FRE</span><span class="ex">0.561019 s</span><span class="lat">0.183 s</span></div>
<div class="row" style="top:493.8px"><span class="cb"></span><span class="host"></span><span class="svc">Load</span><span class="sbug"><svg class="bug" width="14" height="14" viewBox="0 0 14 14"><path d="M0.8 0.8 L13.2 13.2 M13.2 0.8 L0.8 13.2" stroke="#d85868" stroke-width="1.9" opacity="0.9"/><ellipse cx="3" cy="10.2" rx="2.1" ry="2.7" fill="#eaa83a"/><ellipse cx="11" cy="9" rx="1.3" ry="2.4" fill="#6a6a6a"/><ellipse cx="7.2" cy="8" rx="3.6" ry="4.5" fill="#b8343c"/><ellipse cx="7.2" cy="12.2" rx="3" ry="1.4" fill="#2a0a0a"/><ellipse cx="6.6" cy="3.2" rx="2" ry="1.7" fill="#4a4a4a"/><ellipse cx="6.6" cy="8" rx="1.4" ry="1.8" fill="#d84a50"/></svg></span><span class="st">Ok</span><span class="lc">2013-12-02 22:58:50</span><span class="out">Load average: 0.00, 0.01, 0.05.</span><span class="ex">0.546869 s</span><span class="lat">0.181 s</span></div>
<div class="row" style="top:510.9px"><span class="cb"></span><span class="host"></span><span class="svc">Memory</span><span class="sbug"><svg class="bug" width="14" height="14" viewBox="0 0 14 14"><path d="M0.8 0.8 L13.2 13.2 M13.2 0.8 L0.8 13.2" stroke="#d85868" stroke-width="1.9" opacity="0.9"/><ellipse cx="3" cy="10.2" rx="2.1" ry="2.7" fill="#eaa83a"/><ellipse cx="11" cy="9" rx="1.3" ry="2.4" fill="#6a6a6a"/><ellipse cx="7.2" cy="8" rx="3.6" ry="4.5" fill="#b8343c"/><ellipse cx="7.2" cy="12.2" rx="3" ry="1.4" fill="#2a0a0a"/><ellipse cx="6.6" cy="3.2" rx="2" ry="1.7" fill="#4a4a4a"/><ellipse cx="6.6" cy="8" rx="1.4" ry="1.8" fill="#d84a50"/></svg></span><span class="st">Ok</span><span class="lc">2013-12-02 22:58:50</span><span class="out">Total memory used : 14% ram used : 79%, swap used</span><span class="ex">0.761087 s</span><span class="lat">0.186 s</span></div>
<div class="row" style="top:528.1px"><span class="cb"></span><span class="host"></span><span class="svc">Ping</span><span class="sbug"><svg class="bug" width="14" height="14" viewBox="0 0 14 14"><path d="M0.8 0.8 L13.2 13.2 M13.2 0.8 L0.8 13.2" stroke="#d85868" stroke-width="1.9" opacity="0.9"/><ellipse cx="3" cy="10.2" rx="2.1" ry="2.7" fill="#eaa83a"/><ellipse cx="11" cy="9" rx="1.3" ry="2.4" fill="#6a6a6a"/><ellipse cx="7.2" cy="8" rx="3.6" ry="4.5" fill="#b8343c"/><ellipse cx="7.2" cy="12.2" rx="3" ry="1.4" fill="#2a0a0a"/><ellipse cx="6.6" cy="3.2" rx="2" ry="1.7" fill="#4a4a4a"/><ellipse cx="6.6" cy="8" rx="1.4" ry="1.8" fill="#d84a50"/></svg></span><span class="st">Ok</span><span class="lc">2013-12-02 22:58:50</span><span class="out">OK - 172.16.209.208: rta 0,021ms, lost 0%</span><span class="ex">0.185455 s</span><span class="lat">0.18 s</span></div>
<div class="row" style="top:545.2px"><span class="cb"></span><span class="host"></span><span class="svc">Swap</span><span class="sbug"><svg class="bug" width="14" height="14" viewBox="0 0 14 14"><path d="M0.8 0.8 L13.2 13.2 M13.2 0.8 L0.8 13.2" stroke="#d85868" stroke-width="1.9" opacity="0.9"/><ellipse cx="3" cy="10.2" rx="2.1" ry="2.7" fill="#eaa83a"/><ellipse cx="11" cy="9" rx="1.3" ry="2.4" fill="#6a6a6a"/><ellipse cx="7.2" cy="8" rx="3.6" ry="4.5" fill="#b8343c"/><ellipse cx="7.2" cy="12.2" rx="3" ry="1.4" fill="#2a0a0a"/><ellipse cx="6.6" cy="3.2" rx="2" ry="1.7" fill="#4a4a4a"/><ellipse cx="6.6" cy="8" rx="1.4" ry="1.8" fill="#d84a50"/></svg></span><span class="st">Ok</span><span class="lc">2013-12-02 22:58:50</span><span class="out">Disk OK - Swap space TOTAL: 0.437GB USED: 0.000GB</span><span class="ex">0.560099 s</span><span class="lat">0.184 s</span></div>
<div class="row" style="top:562.3px"><span class="cb"></span><span class="host">poller10</span><span class="hbug"><svg class="bug" width="14" height="14" viewBox="0 0 14 14"><path d="M0.8 0.8 L13.2 13.2 M13.2 0.8 L0.8 13.2" stroke="#d85868" stroke-width="1.9" opacity="0.9"/><ellipse cx="3" cy="10.2" rx="2.1" ry="2.7" fill="#eaa83a"/><ellipse cx="11" cy="9" rx="1.3" ry="2.4" fill="#6a6a6a"/><ellipse cx="7.2" cy="8" rx="3.6" ry="4.5" fill="#b8343c"/><ellipse cx="7.2" cy="12.2" rx="3" ry="1.4" fill="#2a0a0a"/><ellipse cx="6.6" cy="3.2" rx="2" ry="1.7" fill="#4a4a4a"/><ellipse cx="6.6" cy="8" rx="1.4" ry="1.8" fill="#d84a50"/></svg></span><span class="svc">Disk-/</span><span class="sbug"><svg class="bug" width="14" height="14" viewBox="0 0 14 14"><path d="M0.8 0.8 L13.2 13.2 M13.2 0.8 L0.8 13.2" stroke="#d85868" stroke-width="1.9" opacity="0.9"/><ellipse cx="3" cy="10.2" rx="2.1" ry="2.7" fill="#eaa83a"/><ellipse cx="11" cy="9" rx="1.3" ry="2.4" fill="#6a6a6a"/><ellipse cx="7.2" cy="8" rx="3.6" ry="4.5" fill="#b8343c"/><ellipse cx="7.2" cy="12.2" rx="3" ry="1.4" fill="#2a0a0a"/><ellipse cx="6.6" cy="3.2" rx="2" ry="1.7" fill="#4a4a4a"/><ellipse cx="6.6" cy="8" rx="1.4" ry="1.8" fill="#d84a50"/></svg></span><span class="st">Ok</span><span class="lc">2013-12-02 22:58:52</span><span class="out">Disk OK - / TOTAL: 0.314GB USED: 0.121GB (38%) FRE</span><span class="ex">1.239132 s</span><span class="lat">0.896 s</span></div>
<div class="row" style="top:579.4px"><span class="cb"></span><span class="host"></span><span class="svc">Load</span><span class="sbug"><svg class="bug" width="14" height="14" viewBox="0 0 14 14"><path d="M0.8 0.8 L13.2 13.2 M13.2 0.8 L0.8 13.2" stroke="#d85868" stroke-width="1.9" opacity="0.9"/><ellipse cx="3" cy="10.2" rx="2.1" ry="2.7" fill="#eaa83a"/><ellipse cx="11" cy="9" rx="1.3" ry="2.4" fill="#6a6a6a"/><ellipse cx="7.2" cy="8" rx="3.6" ry="4.5" fill="#b8343c"/><ellipse cx="7.2" cy="12.2" rx="3" ry="1.4" fill="#2a0a0a"/><ellipse cx="6.6" cy="3.2" rx="2" ry="1.7" fill="#4a4a4a"/><ellipse cx="6.6" cy="8" rx="1.4" ry="1.8" fill="#d84a50"/></svg></span><span class="st">Ok</span><span class="lc">2013-12-02 22:58:51</span><span class="out">Load average: 0.38, 0.68, 0.70.</span><span class="ex">0.452218 s</span><span class="lat">0.851 s</span></div>
<div class="row" style="top:596.5px"><span class="cb"></span><span class="host"></span><span class="svc">Memory</span><span class="sbug"><svg class="bug" width="14" height="14" viewBox="0 0 14 14"><path d="M0.8 0.8 L13.2 13.2 M13.2 0.8 L0.8 13.2" stroke="#d85868" stroke-width="1.9" opacity="0.9"/><ellipse cx="3" cy="10.2" rx="2.1" ry="2.7" fill="#eaa83a"/><ellipse cx="11" cy="9" rx="1.3" ry="2.4" fill="#6a6a6a"/><ellipse cx="7.2" cy="8" rx="3.6" ry="4.5" fill="#b8343c"/><ellipse cx="7.2" cy="12.2" rx="3" ry="1.4" fill="#2a0a0a"/><ellipse cx="6.6" cy="3.2" rx="2" ry="1.7" fill="#4a4a4a"/><ellipse cx="6.6" cy="8" rx="1.4" ry="1.8" fill="#d84a50"/></svg></span><span class="st">Ok</span><span class="lc">2013-12-02 22:58:58</span><span class="out">Total memory used : 13% ram used : 62%, swap used</span><span class="ex">0.908576 s</span><span class="lat">0.763 s</span></div>
<div class="row" style="top:613.7px"><span class="cb"></span><span class="host"></span><span class="svc">Ping</span><span class="sbug"><svg class="bug" width="14" height="14" viewBox="0 0 14 14"><path d="M0.8 0.8 L13.2 13.2 M13.2 0.8 L0.8 13.2" stroke="#d85868" stroke-width="1.9" opacity="0.9"/><ellipse cx="3" cy="10.2" rx="2.1" ry="2.7" fill="#eaa83a"/><ellipse cx="11" cy="9" rx="1.3" ry="2.4" fill="#6a6a6a"/><ellipse cx="7.2" cy="8" rx="3.6" ry="4.5" fill="#b8343c"/><ellipse cx="7.2" cy="12.2" rx="3" ry="1.4" fill="#2a0a0a"/><ellipse cx="6.6" cy="3.2" rx="2" ry="1.7" fill="#4a4a4a"/><ellipse cx="6.6" cy="8" rx="1.4" ry="1.8" fill="#d84a50"/></svg></span><span class="st">Ok</span><span class="lc">2013-12-02 22:58:51</span><span class="out">OK - 172.16.209.207: rta 0,025ms, lost 0%</span><span class="ex">0.178663 s</span><span class="lat">0.85 s</span></div>
<div class="row" style="top:630.8px"><span class="cb"></span><span class="host"></span><span class="svc">Swap</span><span class="sbug"><svg class="bug" width="14" height="14" viewBox="0 0 14 14"><path d="M0.8 0.8 L13.2 13.2 M13.2 0.8 L0.8 13.2" stroke="#d85868" stroke-width="1.9" opacity="0.9"/><ellipse cx="3" cy="10.2" rx="2.1" ry="2.7" fill="#eaa83a"/><ellipse cx="11" cy="9" rx="1.3" ry="2.4" fill="#6a6a6a"/><ellipse cx="7.2" cy="8" rx="3.6" ry="4.5" fill="#b8343c"/><ellipse cx="7.2" cy="12.2" rx="3" ry="1.4" fill="#2a0a0a"/><ellipse cx="6.6" cy="3.2" rx="2" ry="1.7" fill="#4a4a4a"/><ellipse cx="6.6" cy="8" rx="1.4" ry="1.8" fill="#d84a50"/></svg></span><span class="st">Ok</span><span class="lc">2013-12-02 22:58:52</span><span class="out">Disk OK - Swap space TOTAL: 0.437GB USED: 0.000GB</span><span class="ex">1.251552 s</span><span class="lat">0.883 s</span></div>
<div class="row" style="top:647.9px"><span class="cb"></span><span class="host">poller2</span><span class="hbug"><svg class="bug" width="14" height="14" viewBox="0 0 14 14"><path d="M0.8 0.8 L13.2 13.2 M13.2 0.8 L0.8 13.2" stroke="#d85868" stroke-width="1.9" opacity="0.9"/><ellipse cx="3" cy="10.2" rx="2.1" ry="2.7" fill="#eaa83a"/><ellipse cx="11" cy="9" rx="1.3" ry="2.4" fill="#6a6a6a"/><ellipse cx="7.2" cy="8" rx="3.6" ry="4.5" fill="#b8343c"/><ellipse cx="7.2" cy="12.2" rx="3" ry="1.4" fill="#2a0a0a"/><ellipse cx="6.6" cy="3.2" rx="2" ry="1.7" fill="#4a4a4a"/><ellipse cx="6.6" cy="8" rx="1.4" ry="1.8" fill="#d84a50"/></svg></span><span class="svc">Disk-/</span><span class="sbug"><svg class="bug" width="14" height="14" viewBox="0 0 14 14"><path d="M0.8 0.8 L13.2 13.2 M13.2 0.8 L0.8 13.2" stroke="#d85868" stroke-width="1.9" opacity="0.9"/><ellipse cx="3" cy="10.2" rx="2.1" ry="2.7" fill="#eaa83a"/><ellipse cx="11" cy="9" rx="1.3" ry="2.4" fill="#6a6a6a"/><ellipse cx="7.2" cy="8" rx="3.6" ry="4.5" fill="#b8343c"/><ellipse cx="7.2" cy="12.2" rx="3" ry="1.4" fill="#2a0a0a"/><ellipse cx="6.6" cy="3.2" rx="2" ry="1.7" fill="#4a4a4a"/><ellipse cx="6.6" cy="8" rx="1.4" ry="1.8" fill="#d84a50"/></svg></span><span class="st">Ok</span><span class="lc">2013-12-02 22:58:52</span><span class="out">Disk OK - / TOTAL: 0.314GB USED: 0.121GB (38%) FRE</span><span class="ex">1.246373 s</span><span class="lat">0.888 s</span></div>
<div class="row" style="top:665.0px"><span class="cb"></span><span class="host"></span><span class="svc">Load</span><span class="sbug"><svg class="bug" width="14" height="14" viewBox="0 0 14 14"><path d="M0.8 0.8 L13.2 13.2 M13.2 0.8 L0.8 13.2" stroke="#d85868" stroke-width="1.9" opacity="0.9"/><ellipse cx="3" cy="10.2" rx="2.1" ry="2.7" fill="#eaa83a"/><ellipse cx="11" cy="9" rx="1.3" ry="2.4" fill="#6a6a6a"/><ellipse cx="7.2" cy="8" rx="3.6" ry="4.5" fill="#b8343c"/><ellipse cx="7.2" cy="12.2" rx="3" ry="1.4" fill="#2a0a0a"/><ellipse cx="6.6" cy="3.2" rx="2" ry="1.7" fill="#4a4a4a"/><ellipse cx="6.6" cy="8" rx="1.4" ry="1.8" fill="#d84a50"/></svg></span><span class="st">Ok</span><span class="lc">2013-12-02 22:58:52</span><span class="out">Load average: 0.38, 0.68, 0.70.</span><span class="ex">1.23754 s</span><span class="lat">0.858 s</span></div>
<div class="row" style="top:682.1px"><span class="cb"></span><span class="host"></span><span class="svc">Memory</span><span class="sbug"><svg class="bug" width="14" height="14" viewBox="0 0 14 14"><path d="M0.8 0.8 L13.2 13.2 M13.2 0.8 L0.8 13.2" stroke="#d85868" stroke-width="1.9" opacity="0.9"/><ellipse cx="3" cy="10.2" rx="2.1" ry="2.7" fill="#eaa83a"/><ellipse cx="11" cy="9" rx="1.3" ry="2.4" fill="#6a6a6a"/><ellipse cx="7.2" cy="8" rx="3.6" ry="4.5" fill="#b8343c"/><ellipse cx="7.2" cy="12.2" rx="3" ry="1.4" fill="#2a0a0a"/><ellipse cx="6.6" cy="3.2" rx="2" ry="1.7" fill="#4a4a4a"/><ellipse cx="6.6" cy="8" rx="1.4" ry="1.8" fill="#d84a50"/></svg></span><span class="st">Ok</span><span class="lc">2013-12-02 22:58:58</span><span class="out">Total memory used : 13% ram used : 62%, swap used</span><span class="ex">0.703202 s</span><span class="lat">0.762 s</span></div>
<div class="row" style="top:699.3px"><span class="cb"></span><span class="host"></span><span class="svc">Ping</span><span class="sbug"><svg class="bug" width="14" height="14" viewBox="0 0 14 14"><path d="M0.8 0.8 L13.2 13.2 M13.2 0.8 L0.8 13.2" stroke="#d85868" stroke-width="1.9" opacity="0.9"/><ellipse cx="3" cy="10.2" rx="2.1" ry="2.7" fill="#eaa83a"/><ellipse cx="11" cy="9" rx="1.3" ry="2.4" fill="#6a6a6a"/><ellipse cx="7.2" cy="8" rx="3.6" ry="4.5" fill="#b8343c"/><ellipse cx="7.2" cy="12.2" rx="3" ry="1.4" fill="#2a0a0a"/><ellipse cx="6.6" cy="3.2" rx="2" ry="1.7" fill="#4a4a4a"/><ellipse cx="6.6" cy="8" rx="1.4" ry="1.8" fill="#d84a50"/></svg></span><span class="st">Ok</span><span class="lc">2013-12-02 22:58:52</span><span class="out">OK - 172.16.209.207: rta 0,026ms, lost 0%</span><span class="ex">0.053045 s</span><span class="lat">0.853 s</span></div>
<div class="row" style="top:716.4px"><span class="cb"></span><span class="host"></span><span class="svc">Swap</span><span class="sbug"><svg class="bug" width="14" height="14" viewBox="0 0 14 14"><path d="M0.8 0.8 L13.2 13.2 M13.2 0.8 L0.8 13.2" stroke="#d85868" stroke-width="1.9" opacity="0.9"/><ellipse cx="3" cy="10.2" rx="2.1" ry="2.7" fill="#eaa83a"/><ellipse cx="11" cy="9" rx="1.3" ry="2.4" fill="#6a6a6a"/><ellipse cx="7.2" cy="8" rx="3.6" ry="4.5" fill="#b8343c"/><ellipse cx="7.2" cy="12.2" rx="3" ry="1.4" fill="#2a0a0a"/><ellipse cx="6.6" cy="3.2" rx="2" ry="1.7" fill="#4a4a4a"/><ellipse cx="6.6" cy="8" rx="1.4" ry="1.8" fill="#d84a50"/></svg></span><span class="st">Ok</span><span class="lc">2013-12-02 22:58:52</span><span class="out">Disk OK - Swap space TOTAL: 0.437GB USED: 0.000GB</span><span class="ex">1.260285 s</span><span class="lat">0.873 s</span></div>
<div class="row" style="top:733.5px"><span class="cb"></span><span class="host">poller3</span><span class="hbug"><svg class="bug" width="14" height="14" viewBox="0 0 14 14"><path d="M0.8 0.8 L13.2 13.2 M13.2 0.8 L0.8 13.2" stroke="#d85868" stroke-width="1.9" opacity="0.9"/><ellipse cx="3" cy="10.2" rx="2.1" ry="2.7" fill="#eaa83a"/><ellipse cx="11" cy="9" rx="1.3" ry="2.4" fill="#6a6a6a"/><ellipse cx="7.2" cy="8" rx="3.6" ry="4.5" fill="#b8343c"/><ellipse cx="7.2" cy="12.2" rx="3" ry="1.4" fill="#2a0a0a"/><ellipse cx="6.6" cy="3.2" rx="2" ry="1.7" fill="#4a4a4a"/><ellipse cx="6.6" cy="8" rx="1.4" ry="1.8" fill="#d84a50"/></svg></span><span class="svc">Disk-/</span><span class="sbug"><svg class="bug" width="14" height="14" viewBox="0 0 14 14"><path d="M0.8 0.8 L13.2 13.2 M13.2 0.8 L0.8 13.2" stroke="#d85868" stroke-width="1.9" opacity="0.9"/><ellipse cx="3" cy="10.2" rx="2.1" ry="2.7" fill="#eaa83a"/><ellipse cx="11" cy="9" rx="1.3" ry="2.4" fill="#6a6a6a"/><ellipse cx="7.2" cy="8" rx="3.6" ry="4.5" fill="#b8343c"/><ellipse cx="7.2" cy="12.2" rx="3" ry="1.4" fill="#2a0a0a"/><ellipse cx="6.6" cy="3.2" rx="2" ry="1.7" fill="#4a4a4a"/><ellipse cx="6.6" cy="8" rx="1.4" ry="1.8" fill="#d84a50"/></svg></span><span class="st">Ok</span><span class="lc">2013-12-02 22:58:52</span><span class="out">Disk OK - / TOTAL: 0.314GB USED: 0.121GB (38%) FRE</span><span class="ex">1.243005 s</span><span class="lat">0.857 s</span></div>
<div class="row" style="top:750.6px"><span class="cb"></span><span class="host"></span><span class="svc">Load</span><span class="sbug"><svg class="bug" width="14" height="14" viewBox="0 0 14 14"><path d="M0.8 0.8 L13.2 13.2 M13.2 0.8 L0.8 13.2" stroke="#d85868" stroke-width="1.9" opacity="0.9"/><ellipse cx="3" cy="10.2" rx="2.1" ry="2.7" fill="#eaa83a"/><ellipse cx="11" cy="9" rx="1.3" ry="2.4" fill="#6a6a6a"/><ellipse cx="7.2" cy="8" rx="3.6" ry="4.5" fill="#b8343c"/><ellipse cx="7.2" cy="12.2" rx="3" ry="1.4" fill="#2a0a0a"/><ellipse cx="6.6" cy="3.2" rx="2" ry="1.7" fill="#4a4a4a"/><ellipse cx="6.6" cy="8" rx="1.4" ry="1.8" fill="#d84a50"/></svg></span><span class="st">Ok</span><span class="lc">2013-12-02 22:58:52</span><span class="out"></span><span class="ex"></span><span class="lat"></span></div>
<!-- bottom & right cover -->
<div class="a" style="left:928px;top:306px;width:11px;height:447px;background:#f3f1e6;border-left:1px solid #e6e3d6"></div>
</div>
</body></html>
